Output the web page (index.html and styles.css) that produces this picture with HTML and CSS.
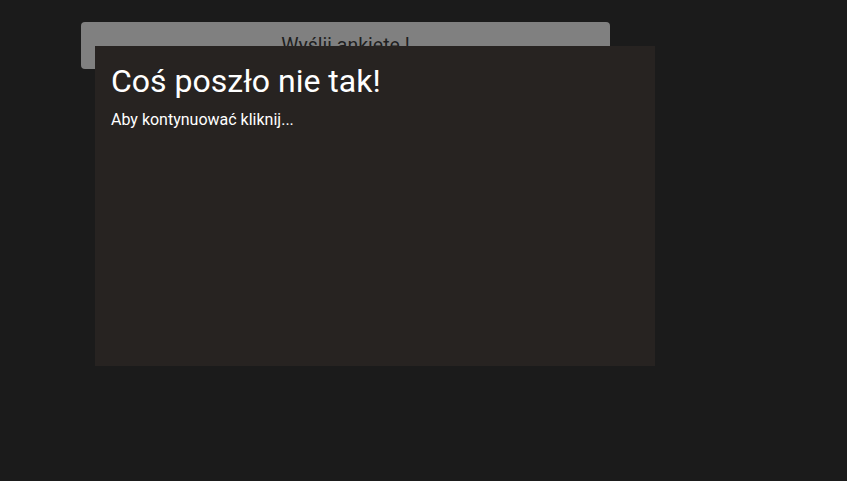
FILE: index.html
```html
<!DOCTYPE html>
<html lang="pl">
<head>
<meta charset="utf-8">
<link rel="stylesheet" href="styles.css">
</head>
<body>
<main class="page">
  <button class="send-btn">Wyślij ankietę !</button>
</main>
<div class="error-box">
  <h1 class="error-title">Coś poszło nie tak!</h1>
  <p class="error-text">Aby kontynuować kliknij...</p>
</div>
</body>
</html>
```
FILE: styles.css
```css
html, body {
  margin: 0;
  padding: 0;
  background: #1b1b1b;
  font-family: Roboto, "Noto Sans", sans-serif;
}
.page {
  padding: 22px 0 0 81px;
}
.send-btn {
  display: block;
  width: 529px;
  height: 47px;
  background: #808080;
  border: none;
  border-radius: 4px;
  color: #1e1e1e;
  font-family: Roboto, sans-serif;
  font-size: 19.5px;
  padding: 0;
}
.error-box {
  position: absolute;
  left: 95px;
  top: 46px;
  width: 560px;
  height: 320px;
  box-sizing: border-box;
  background: #272321;
  padding: 16px;
  color: #fff;
}
.error-title {
  margin: 0;
  font-size: 32px;
  font-weight: 400;
  line-height: 38px;
}
.error-text {
  margin: 10px 0 0;
  font-size: 16px;
  line-height: 20px;
}
```
